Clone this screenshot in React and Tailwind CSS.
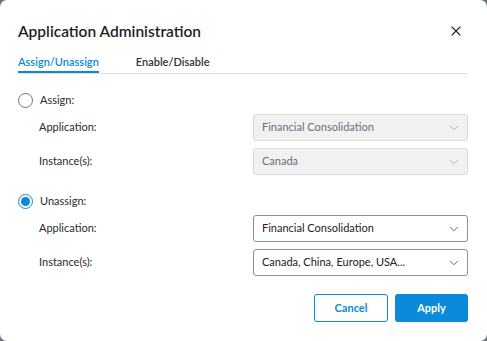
import { X, ChevronDown } from 'lucide-react';

function Radio({ checked, label }) {
  return (
    <div className="flex items-center gap-[7px] h-[20px]">
      {checked ? (
        <span className="w-[15px] h-[15px] rounded-full border-[1.5px] border-[#0a8ad8] flex items-center justify-center">
          <span className="w-[9px] h-[9px] rounded-full bg-[#0a8ad8]" />
        </span>
      ) : (
        <span className="w-[15px] h-[15px] rounded-full border border-[#6f737a]" />
      )}
      <span className="text-[11px] text-[#2a2a2a]">{label}</span>
    </div>
  );
}

function Select({ value, disabled }) {
  return (
    <div
      className={
        disabled
          ? 'w-[215px] h-[27px] rounded-[3px] border border-[#d9dbdf] bg-[#f0f1f3] flex items-center justify-between pl-[8px] pr-[6px]'
          : 'w-[215px] h-[27px] rounded-[3px] border border-[#8b8f96] bg-white flex items-center justify-between pl-[8px] pr-[6px]'
      }
    >
      <span className={disabled ? 'text-[11px] text-[#6c7077]' : 'text-[11px] text-[#222]'}>{value}</span>
      <ChevronDown
        size={14}
        strokeWidth={1.5}
        className={disabled ? 'text-[#a6aab0]' : 'text-[#555]'}
      />
    </div>
  );
}

function Row({ label, value, disabled }) {
  return (
    <div className="flex items-center justify-between pl-[21px]">
      <span className="text-[11px] text-[#2a2a2a]">{label}</span>
      <Select value={value} disabled={disabled} />
    </div>
  );
}

export default function App() {
  return (
    <div
      className="w-[487px] h-[341px] bg-[#6e737a]"
      style={{ fontFamily: 'Lato, "Noto Sans", sans-serif' }}
    >
      <div className="w-full h-full bg-white rounded-[7px] pl-[18px] pr-[19px] pt-[20px]">
        <div className="flex items-center justify-between">
          <h1 className="text-[15.5px] font-semibold text-[#1f1f1f] leading-[22px]">
            Application Administration
          </h1>
          <X size={16} strokeWidth={1.6} className="text-[#222] mr-[4px]" />
        </div>

        <div className="mt-[11px] flex border-b border-[#dfe1e4] h-[21px]">
          <div className="text-[11px] font-semibold text-[#0a8ad8] border-b-2 border-[#0a8ad8] leading-[17px] pb-[2px]">
            Assign/Unassign
          </div>
          <div className="ml-[37px] text-[11px] font-semibold text-[#333] leading-[17px]">
            Enable/Disable
          </div>
        </div>

        <div className="mt-[16px]">
          <Radio label="Assign:" />
          <div className="mt-[4px] flex flex-col gap-[7px]">
            <Row label="Application:" value="Financial Consolidation" disabled />
            <Row label="Instance(s):" value="Canada" disabled />
          </div>
        </div>

        <div className="mt-[16px]">
          <Radio checked label="Unassign:" />
          <div className="mt-[4px] flex flex-col gap-[7px]">
            <Row label="Application:" value="Financial Consolidation" />
            <Row label="Instance(s):" value="Canada, China, Europe, USA..." />
          </div>
        </div>

        <div className="mt-[18px] flex justify-end gap-[7px]">
          <button className="w-[74px] h-[28px] rounded-[3px] border border-[#0a8ad8] text-[11px] font-bold text-[#0a8ad8] bg-white">
            Cancel
          </button>
          <button className="w-[73px] h-[28px] rounded-[3px] bg-[#0a8ad8] text-[11px] font-bold text-white">
            Apply
          </button>
        </div>
      </div>
    </div>
  );
}
